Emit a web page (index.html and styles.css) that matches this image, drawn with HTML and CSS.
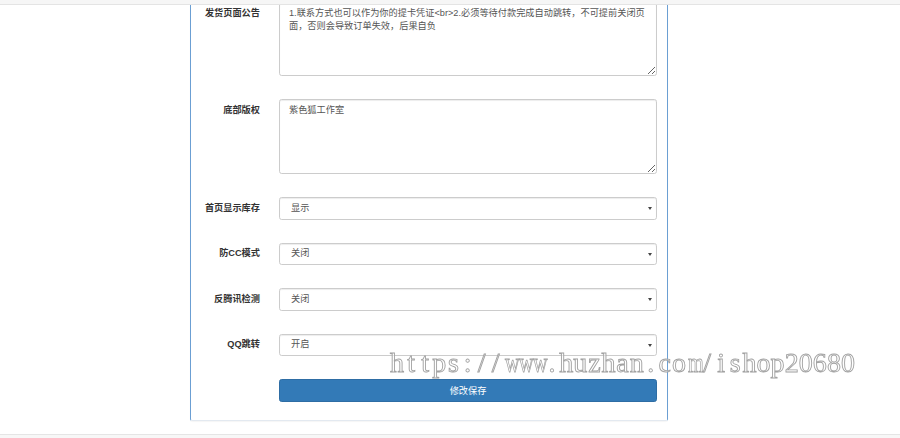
FILE: index.html
```html
<!DOCTYPE html>
<html lang="zh-CN">
<head>
    <meta charset="UTF-8">
    <meta name="viewport" content="width=device-width, initial-scale=1.0">
    <title>系统设置</title>
    <link rel="stylesheet" href="styles.css">
</head>
<body>
    <div class="topbar"></div>
    <div class="main">
        <div class="panel">
            <form class="form-horizontal">
                <label class="control-label">发货页面公告</label>
                <textarea class="form-control notice">1.联系方式也可以作为你的提卡凭证&lt;br&gt;2.必须等待付款完成自动跳转，不可提前关闭页面，否则会导致订单失效，后果自负</textarea>

                <label class="control-label">底部版权</label>
                <textarea class="form-control">紫色狐工作室</textarea>

                <label class="control-label">首页显示库存</label>
                <div class="select-wrap">
                    <select class="form-control">
                        <option>显示</option>
                        <option>隐藏</option>
                    </select>
                </div>

                <label class="control-label">防CC模式</label>
                <div class="select-wrap">
                    <select class="form-control">
                        <option>关闭</option>
                        <option>开启</option>
                    </select>
                </div>

                <label class="control-label">反腾讯检测</label>
                <div class="select-wrap">
                    <select class="form-control">
                        <option>关闭</option>
                        <option>开启</option>
                    </select>
                </div>

                <label class="control-label">QQ跳转</label>
                <div class="select-wrap">
                    <select class="form-control">
                        <option>开启</option>
                        <option>关闭</option>
                    </select>
                </div>

                <button type="button" class="btn-save">修改保存</button>
            </form>
        </div>
    </div>
    <!-- watermark: serif glyphs in fixed-width cells -->
    <div class="watermark"><span>h</span><span>t</span><span>t</span><span>p</span><span>s</span><span>:</span><span>/</span><span>/</span><span class="wide">w</span><span class="wide">w</span><span class="wide">w</span><span>.</span><span>h</span><span>u</span><span>z</span><span>h</span><span>a</span><span>n</span><span>.</span><span>c</span><span>o</span><span class="wide">m</span><span>/</span><span>i</span><span>s</span><span>h</span><span>o</span><span>p</span><span>2</span><span>0</span><span>6</span><span>8</span><span>0</span></div>
    <footer class="footer"></footer>
</body>
</html>
```

FILE: styles.css
```css
body {
    margin: 0;
    background: #fff;
    font-family: "Liberation Sans", "Noto Sans CJK SC", sans-serif;
    font-size: 9.2px;
    line-height: 13.33px;
    color: #333;
}
/* header strip, only its lower edge is still on screen */
.topbar {
    position: fixed;
    top: 0;
    left: 0;
    right: 0;
    height: 4px;
    background: #f6f6f6;
    border-bottom: 1px solid #e4e4e4;
    z-index: 5;
}
.main {
    width: 478px;
    margin-left: 190px;
}
.panel {
    border: 1px solid #6b9fd3;
    border-bottom-color: #e3e9f0;
    border-radius: 0 0 2px 2px;
    box-shadow: 0 1px 1px rgba(0, 0, 0, 0.04);
    padding: 1px 10px 18px 0;
}
.form-horizontal {
    display: grid;
    grid-template-columns: 69px 378px;
    column-gap: 19px;
    row-gap: 23px;
}
.control-label {
    padding-top: 4.6px;
    text-align: right;
    font-weight: bold;
    color: #333;
}
.form-control {
    box-sizing: border-box;
    width: 100%;
    margin: 0;
    font-family: inherit;
    font-size: 9.2px;
    line-height: 13.33px;
    color: #555;
    background: #fff;
    border: 1px solid #ccc;
    border-radius: 2.67px;
    box-shadow: inset 0 1px 1px rgba(0, 0, 0, 0.075);
}
textarea.form-control {
    height: 75px;
    padding: 4px 6px 4px 9px;
    resize: vertical;
}
textarea.notice {
    height: 74px;
}
.select-wrap {
    position: relative;
}
.select-wrap select {
    -webkit-appearance: none;
    appearance: none;
    display: block;
    height: 22.5px;
    padding: 0 16px 0 11px;
}
.select-wrap::after {
    content: "";
    position: absolute;
    right: 5px;
    top: 10px;
    border-left: 2px solid transparent;
    border-right: 2px solid transparent;
    border-top: 3px solid #444;
    pointer-events: none;
}
.btn-save {
    grid-column: 2;
    height: 22.67px;
    padding: 0;
    font-family: inherit;
    font-size: 9.2px;
    color: #fff;
    background: #337ab7;
    border: 1px solid #2e6da4;
    border-radius: 2.67px;
    cursor: pointer;
}
.watermark {
    position: absolute;
    left: 390px;
    top: 349px;
    display: flex;
    font-family: "Liberation Serif", serif;
    font-size: 28px;
    line-height: 28px;
    color: rgba(255, 255, 255, 0.6);
    -webkit-text-stroke: 0.9px #a2a2a2;
    white-space: nowrap;
    pointer-events: none;
    will-change: transform;
}
.watermark span {
    width: 14.1px;
    text-align: center;
}
.watermark span.wide {
    transform: scaleX(0.72);
}
.footer {
    margin-top: 13px;
    height: 40px;
    background: #f7f7f7;
    border-top: 1px solid #e5e5e5;
}
```
